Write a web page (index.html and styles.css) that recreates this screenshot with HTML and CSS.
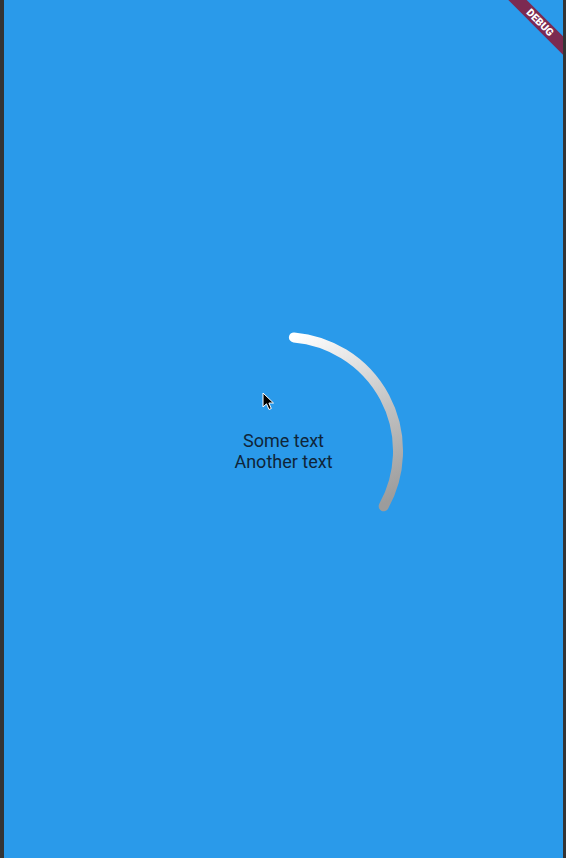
FILE: index.html
```html
<!DOCTYPE html>
<html>
<head>
<meta charset="utf-8">
<link rel="stylesheet" href="styles.css">
</head>
<body>
<div class="frame">
  <div class="app">
    <div class="stack">
      <svg class="arc" width="240" height="240" viewBox="0 0 240 240">
        <defs>
          <linearGradient id="g" gradientUnits="userSpaceOnUse" x1="130" y1="6" x2="215" y2="175">
            <stop offset="0" stop-color="#ffffff"/>
            <stop offset="0.55" stop-color="#c2c2c2"/>
            <stop offset="1" stop-color="#9c9c9c"/>
          </linearGradient>
        </defs>
        <path d="M129.9 6.4 A114 114 0 0 1 219.7 175.3" fill="none" stroke="url(#g)" stroke-width="10" stroke-linecap="round"/>
      </svg>
      <div class="texts">
        <div>Some text</div>
        <div>Another text</div>
      </div>
    </div>
    <svg class="cursor" width="14" height="20" viewBox="0 0 14 20">
      <path d="M1 1 L1 15 L4.5 11.8 L7 17.5 L9.3 16.5 L6.9 11 L11.5 11 Z" fill="#000" stroke="#fff" stroke-width="1" stroke-linejoin="round"/>
    </svg>
    <div class="banner">DEBUG</div>
  </div>
</div>
</body>
</html>
```

FILE: styles.css
```css
html, body {
  margin: 0;
  padding: 0;
  height: 100%;
}
body {
  background: #343434;
}
.frame {
  display: flex;
  height: 858px;
  padding-left: 4px;
  width: 559px;
}
.app {
  position: relative;
  flex: 1;
  background: #2a9aea;
  overflow: hidden;
  display: grid;
  place-items: center;
  padding-top: 44px;
  box-sizing: border-box;
}
.stack {
  display: grid;
  place-items: center;
}
.arc, .texts {
  grid-area: 1 / 1;
}
.texts {
  font-family: Roboto, "Noto Sans", sans-serif;
  font-size: 18px;
  line-height: 21px;
  color: #0f2539;
  text-align: center;
}
.cursor {
  position: absolute;
  left: 257.5px;
  top: 392px;
}
.banner {
  position: absolute;
  top: 15.5px;
  right: -27px;
  width: 100px;
  height: 13px;
  background: #7c2a51;
  color: #fff;
  font-family: Roboto, "Noto Sans", sans-serif;
  font-size: 10.5px;
  font-weight: 900;
  line-height: 13px;
  text-align: center;
  transform: rotate(45deg);
}
```
